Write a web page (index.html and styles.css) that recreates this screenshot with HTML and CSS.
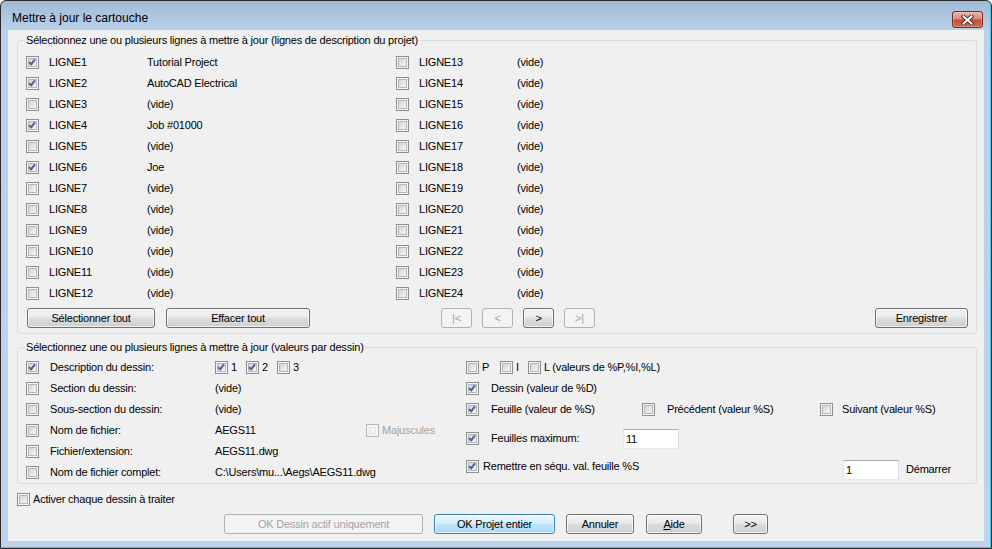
FILE: index.html
```html
<!DOCTYPE html>
<html lang="fr">
<head>
	<meta charset="UTF-8">
	<title>Mettre à jour le cartouche</title>
	<link rel="stylesheet" href="styles.css">
</head>
<body class="body">
	<div class="window">
		<div class="titlebar">
			<span class="title">Mettre à jour le cartouche</span>
			<span class="close">
				<svg width="13" height="10" viewBox="0 0 13 10">
					<path d="M2.5 1.5 L10.5 8.5 M10.5 1.5 L2.5 8.5" stroke="#5a2a24" stroke-width="4" stroke-linecap="square" fill="none"/>
					<path d="M2.5 1.5 L10.5 8.5 M10.5 1.5 L2.5 8.5" stroke="#fff" stroke-width="2" stroke-linecap="square" fill="none"/>
				</svg>
			</span>
		</div>
		<div class="client">
			<fieldset class="group group--lines">
				<legend class="group__legend">Sélectionnez une ou plusieurs lignes à mettre à jour (lignes de description du projet)</legend>
				<div class="lines">
					<div class="lines__col">
						<div class="line"><span class="cb cb--on"></span><span class="line__name">LIGNE1</span><span>Tutorial Project</span></div>
						<div class="line"><span class="cb cb--on"></span><span class="line__name">LIGNE2</span><span>AutoCAD Electrical</span></div>
						<div class="line"><span class="cb"></span><span class="line__name">LIGNE3</span><span>(vide)</span></div>
						<div class="line"><span class="cb cb--on"></span><span class="line__name">LIGNE4</span><span>Job #01000</span></div>
						<div class="line"><span class="cb"></span><span class="line__name">LIGNE5</span><span>(vide)</span></div>
						<div class="line"><span class="cb cb--on"></span><span class="line__name">LIGNE6</span><span>Joe</span></div>
						<div class="line"><span class="cb"></span><span class="line__name">LIGNE7</span><span>(vide)</span></div>
						<div class="line"><span class="cb"></span><span class="line__name">LIGNE8</span><span>(vide)</span></div>
						<div class="line"><span class="cb"></span><span class="line__name">LIGNE9</span><span>(vide)</span></div>
						<div class="line"><span class="cb"></span><span class="line__name">LIGNE10</span><span>(vide)</span></div>
						<div class="line"><span class="cb"></span><span class="line__name">LIGNE11</span><span>(vide)</span></div>
						<div class="line"><span class="cb"></span><span class="line__name">LIGNE12</span><span>(vide)</span></div>
					</div>
					<div class="lines__col">
						<div class="line"><span class="cb"></span><span class="line__name">LIGNE13</span><span>(vide)</span></div>
						<div class="line"><span class="cb"></span><span class="line__name">LIGNE14</span><span>(vide)</span></div>
						<div class="line"><span class="cb"></span><span class="line__name">LIGNE15</span><span>(vide)</span></div>
						<div class="line"><span class="cb"></span><span class="line__name">LIGNE16</span><span>(vide)</span></div>
						<div class="line"><span class="cb"></span><span class="line__name">LIGNE17</span><span>(vide)</span></div>
						<div class="line"><span class="cb"></span><span class="line__name">LIGNE18</span><span>(vide)</span></div>
						<div class="line"><span class="cb"></span><span class="line__name">LIGNE19</span><span>(vide)</span></div>
						<div class="line"><span class="cb"></span><span class="line__name">LIGNE20</span><span>(vide)</span></div>
						<div class="line"><span class="cb"></span><span class="line__name">LIGNE21</span><span>(vide)</span></div>
						<div class="line"><span class="cb"></span><span class="line__name">LIGNE22</span><span>(vide)</span></div>
						<div class="line"><span class="cb"></span><span class="line__name">LIGNE23</span><span>(vide)</span></div>
						<div class="line"><span class="cb"></span><span class="line__name">LIGNE24</span><span>(vide)</span></div>
					</div>
				</div>
				<div class="toolbar">
					<span class="btn toolbar__select">Sélectionner tout</span>
					<span class="btn toolbar__clear">Effacer tout</span>
					<span class="btn btn--off toolbar__nav toolbar__nav--first">|&lt;</span>
					<span class="btn btn--off toolbar__nav">&lt;</span>
					<span class="btn toolbar__nav">&gt;</span>
					<span class="btn btn--off toolbar__nav">&gt;|</span>
					<span class="btn toolbar__save">Enregistrer</span>
				</div>
			</fieldset>

			<fieldset class="group group--values">
				<legend class="group__legend">Sélectionnez une ou plusieurs lignes à mettre à jour (valeurs par dessin)</legend>
				<div class="values">
					<div class="values__col values__col--left">
						<div class="opt">
							<span class="cb cb--on"></span><span class="opt__label">Description du dessin:</span>
							<span class="sub"><span class="cb cb--on"></span>1</span>
							<span class="sub"><span class="cb cb--on"></span>2</span>
							<span class="sub"><span class="cb"></span>3</span>
						</div>
						<div class="opt"><span class="cb"></span><span class="opt__label">Section du dessin:</span><span>(vide)</span></div>
						<div class="opt"><span class="cb"></span><span class="opt__label">Sous-section du dessin:</span><span>(vide)</span></div>
						<div class="opt">
							<span class="cb"></span><span class="opt__label">Nom de fichier:</span><span class="opt__file">AEGS11</span>
							<span class="caps"><span class="cb cb--disabled"></span>Majuscules</span>
						</div>
						<div class="opt"><span class="cb"></span><span class="opt__label">Fichier/extension:</span><span class="opt__file">AEGS11.dwg</span></div>
						<div class="opt"><span class="cb"></span><span class="opt__label">Nom de fichier complet:</span><span>C:\Users\mu...\Aegs\AEGS11.dwg</span></div>
					</div>
					<div class="values__col values__col--right">
						<div class="opt">
							<span class="sub sub--p"><span class="cb"></span>P</span>
							<span class="sub sub--i"><span class="cb"></span>I</span>
							<span class="sub"><span class="cb"></span>L (valeurs de %P,%I,%L)</span>
						</div>
						<div class="opt opt--right"><span class="cb cb--on"></span><span>Dessin (valeur de %D)</span></div>
						<div class="opt opt--right">
							<span class="cb cb--on"></span><span class="opt__sheet">Feuille (valeur de %S)</span>
							<span class="cb"></span><span class="opt__prev">Précédent (valeur %S)</span>
							<span class="cb opt__next-cb"></span><span>Suivant (valeur %S)</span>
						</div>
						<div class="opt opt--right opt--max">
							<span class="cb cb--on"></span><span class="opt__max">Feuilles maximum:</span>
							<span class="field">11</span>
						</div>
						<div class="opt opt--reset">
							<span class="opt__reset"><span class="cb cb--on"></span>Remettre en séqu. val. feuille %S</span>
							<span class="field">1</span>
							<span class="opt__start">Démarrer</span>
						</div>
					</div>
				</div>
			</fieldset>

			<div class="activate"><span class="cb"></span>Activer chaque dessin à traiter</div>

			<div class="actions">
				<span class="btn btn--off actions__active">OK Dessin actif uniquement</span>
				<span class="btn btn--default actions__project">OK Projet entier</span>
				<span class="btn actions__cancel">Annuler</span>
				<span class="btn actions__help"><u>A</u>ide</span>
				<span class="btn actions__more">&gt;&gt;</span>
			</div>
		</div>
	</div>
</body>
</html>
```

FILE: styles.css
```css
:root {
	--face: #f0f0f0;
	--group-line: #d5dfe5;
	--text: #000;
	--muted: #a3a3a3;
}

*,
*::before,
*::after {
	box-sizing: border-box;
}

.body {
	margin: 0;
	width: 992px;
	height: 549px;
	overflow: hidden;
	background: #fff;
	color: var(--text);
	font: 11px/13px "Liberation Sans", Arial, sans-serif;
}

/* window frame */
.window {
	display: flex;
	flex-direction: column;
	width: 992px;
	height: 549px;
	border: 1px solid #2a2a2a;
	border-radius: 6px 6px 0 0;
	background: linear-gradient(#a1bad6, #b9d1ea 29px, #bcd4ec);
	box-shadow: inset -1px -1px 0 #4cc3df;
}

.titlebar {
	display: flex;
	justify-content: space-between;
	height: 29px;
	padding: 0 8px 0 11px;
}

.title {
	margin-top: 10px;
	font: 12px/15px "Liberation Sans", Arial, sans-serif;
}

.close {
	display: flex;
	align-items: center;
	justify-content: center;
	width: 31px;
	height: 17px;
	margin-top: 10px;
	border: 1px solid #6e2c24;
	border-radius: 3px;
	background: linear-gradient(#e8b0a5, #d98f80 45%, #c5503a 52%, #cf6a52);
	box-shadow: inset 0 0 0 1px rgba(255, 255, 255, 0.25);
}

.client {
	display: flex;
	flex-direction: column;
	flex: 1;
	margin: 0 7px 7px;
	background: var(--face);
	letter-spacing: -0.2px;
}

/* group boxes */
.group {
	min-width: 0;
	margin: 4px 7px 0 9px;
	border: 1px solid var(--group-line);
	border-radius: 3px;
}

.group__legend {
	margin-left: -1px;
	padding: 0 1px;
	line-height: 13px;
}

.group--lines {
	padding: 5px 8px 5px 8px;
}

.group--values {
	margin-top: 7px;
	padding: 3px 8px 0 8px;
}

/* checkboxes */
.cb {
	position: relative;
	flex: none;
	width: 13px;
	height: 13px;
	border: 1px solid #8e8f8f;
	background: linear-gradient(135deg, #c9cdd3, #f4f4f4 80%);
	box-shadow: inset 0 0 0 1px #f5f5f5, inset 0 0 0 2px #b3b8be;
}

.cb--on::after {
	content: "";
	position: absolute;
	left: 3px;
	top: 1px;
	width: 4px;
	height: 7px;
	border: solid #4d6298;
	border-width: 0 2px 2px 0;
	transform: rotate(38deg);
}

.cb--disabled {
	border-color: #b8b8b8;
	background: #f4f4f4;
	box-shadow: inset 0 0 0 2px #f4f4f4, inset 0 0 0 3px #e2e2e2;
}

/* project lines */
.lines {
	display: flex;
}

.lines__col {
	width: 370px;
}

.line {
	display: flex;
	align-items: center;
	height: 21px;
}

.line .cb {
	margin-right: 10px;
}

.line__name {
	width: 98px;
}

/* buttons */
.btn {
	display: flex;
	align-items: center;
	justify-content: center;
	flex: none;
	height: 20px;
	border: 1px solid #707070;
	border-radius: 3px;
	background: linear-gradient(#f2f2f2, #ebebeb 45%, #dddddd 50%, #cfcfcf);
	box-shadow: inset 0 0 0 1px rgba(255, 255, 255, 0.7);
}

.btn--off {
	border-color: #adb2b5;
	background: #f4f4f4;
	box-shadow: none;
	color: var(--muted);
}

.btn--default {
	border-color: #3c7fb1;
	background: linear-gradient(#eaf6fd, #d9f0fc 45%, #bee6fd 50%, #a7d9f5);
}

.toolbar {
	display: flex;
	margin-top: 4px;
}

.toolbar__select {
	width: 128px;
	margin-left: 1px;
}

.toolbar__clear {
	width: 144px;
	margin-left: 11px;
}

.toolbar__nav {
	width: 31px;
	margin-left: 10px;
}

.toolbar__nav--first {
	margin-left: 131px;
}

.toolbar__save {
	width: 93px;
	margin-left: auto;
}

/* per-drawing values */
.values {
	display: flex;
}

.values__col--left {
	width: 440px;
}

.values__col--right {
	flex: 1;
}

.opt {
	display: flex;
	align-items: center;
	height: 21px;
}

.opt .cb {
	margin-right: 11px;
}

.opt__label {
	width: 165px;
}

.opt__file {
	width: 151px;
}

.sub {
	display: flex;
	align-items: center;
	width: 31px;
}

.opt .sub .cb,
.caps .cb {
	margin-right: 3px;
}

.sub--p {
	width: 34px;
}

.sub--i {
	width: 28px;
}

.sub:last-child {
	width: auto;
}

.caps {
	display: flex;
	align-items: center;
	color: var(--muted);
}

.opt--right .cb {
	margin-right: 12px;
}

.opt__sheet {
	width: 151px;
}

.opt__prev {
	width: 153px;
}

.opt--right .opt__next-cb {
	margin-right: 9px;
}

.opt--max {
	margin-top: 8px;
}

.opt__max {
	width: 132px;
}

.field {
	width: 56px;
	height: 20px;
	padding: 3px 0 0 2px;
	border: 1px solid #abadb3;
	border-color: #abadb3 #dbdfe6 #e3e9ef #e2e3ea;
	background: #fff;
}

.opt--reset {
	margin-top: 10px;
}

.opt__reset {
	display: flex;
	align-items: center;
	align-self: flex-start;
	width: 377px;
	padding-top: 1px;
}

.opt .opt__reset .cb {
	margin-right: 4px;
}

.opt__start {
	margin-left: 7px;
}

/* bottom */
.activate {
	display: flex;
	align-items: center;
	height: 13px;
	margin: 9px 0 0 9px;
}

.activate .cb {
	margin-right: 3px;
}

.actions {
	display: flex;
	margin-top: 8px;
	padding-left: 216px;
}

.actions__active {
	width: 199px;
}

.actions__project {
	width: 121px;
	margin-left: 11px;
}

.actions__cancel {
	width: 68px;
	margin-left: 11px;
}

.actions__help {
	width: 56px;
	margin-left: 12px;
}

.actions__more {
	width: 35px;
	margin-left: 31px;
}
```
